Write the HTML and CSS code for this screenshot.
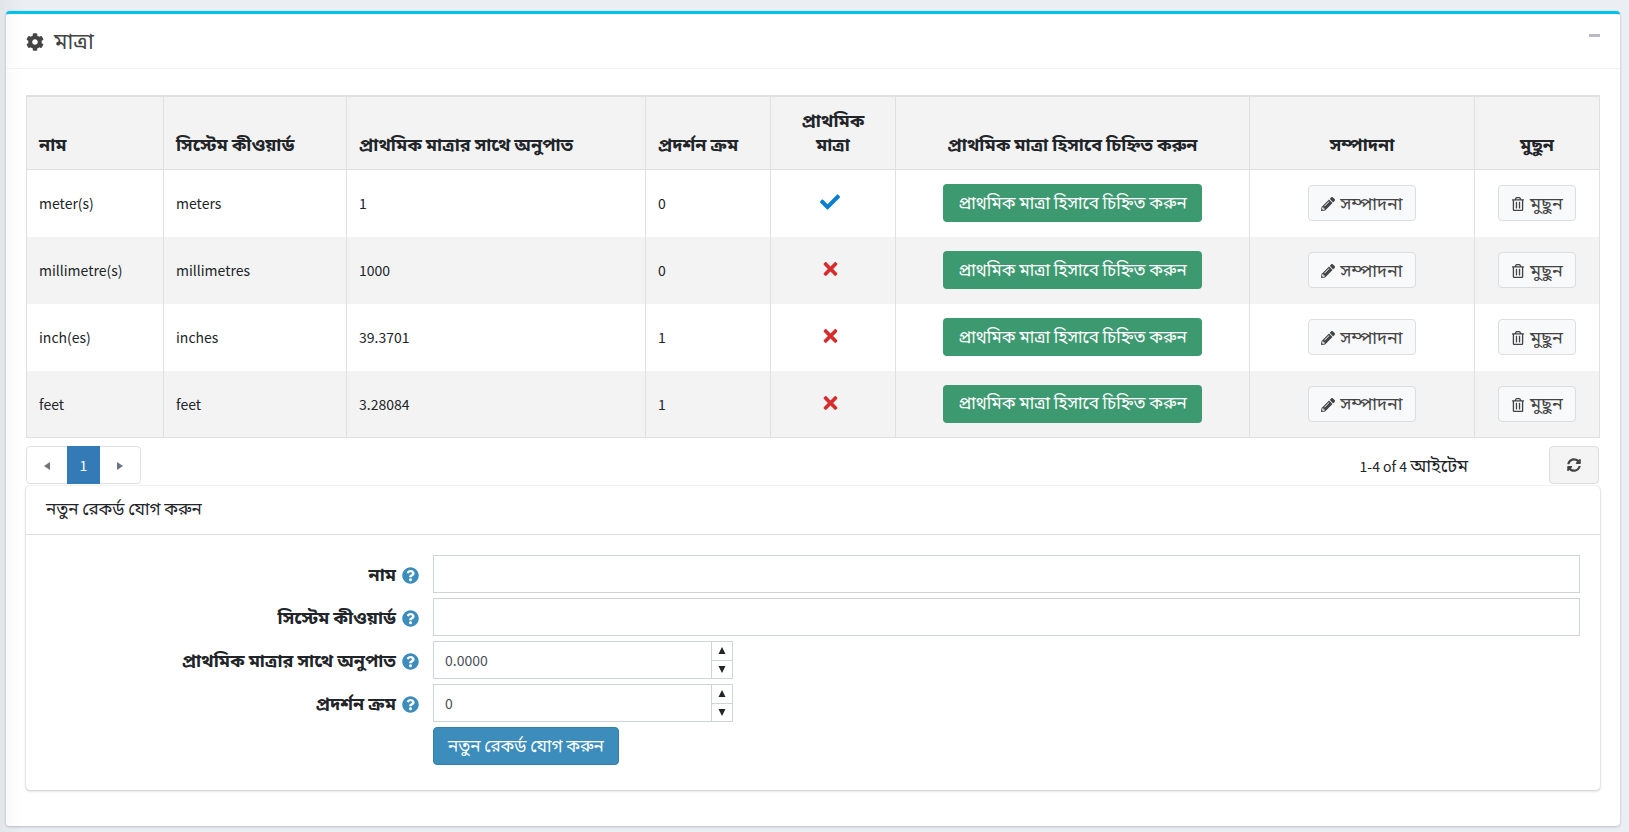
FILE: index.html
```
<!DOCTYPE html>
<html lang="bn">
<head>
<meta charset="utf-8">
<meta name="viewport" content="width=device-width, initial-scale=1">
<title>মাত্রা</title>
<link rel="stylesheet" href="styles.css">
</head>
<body>
<svg class="sprite" aria-hidden="true">
  <symbol id="check" viewBox="0 0 512 512"><path d="M173.900 439.400 7.500 273c-10-10-10-26.200 0-36.200l36.200-36.200c10-10 26.200-10 36.200 0L192 312.700 432.100 72.600c10-10 26.200-10 36.200 0l36.200 36.200c10 10 10 26.200 0 36.200L210.100 439.400c-10 10-26.200 10-36.200 0z"/></symbol>
  <symbol id="times" viewBox="0 0 352 512"><path d="m242.700 256 100.100-100.100c12.300-12.300 12.300-32.200 0-44.500l-22.200-22.200c-12.300-12.300-32.200-12.300-44.500 0L176 189.300 75.900 89.200c-12.300-12.300-32.200-12.300-44.500 0L9.200 111.400c-12.300 12.300-12.300 32.200 0 44.500L109.300 256 9.200 356.100c-12.300 12.300-12.300 32.200 0 44.500l22.200 22.200c12.300 12.300 32.200 12.300 44.500 0L176 322.700l100.100 100.100c12.300 12.300 32.200 12.300 44.500 0l22.200-22.200c12.300-12.300 12.300-32.200 0-44.500z"/></symbol>
  <symbol id="pencil" viewBox="0 0 512 512"><path d="M498 142l-46 46c-5 5-13 5-17 0L324 77c-5-5-5-12 0-17l46-46c19-19 49-19 68 0l60 60c19 19 19 49 0 68zM284.200 99.800 21.600 362.400.400 483.900c-2.900 16.400 11.400 30.600 27.800 27.800l121.500-21.300 262.600-262.600c4.800-4.800 4.800-12.600 0-17.400l-111-111c-4.800-4.700-12.600-4.700-17.700.400zM124 340c-5.500-5.500-5.500-14.300 0-19.800l154-154c5.500-5.500 14.300-5.500 19.800 0s5.500 14.300 0 19.800l-154 154c-5.500 5.500-14.300 5.500-19.800 0zM88 424h48v36.300l-64.500 11.300-31.100-31.100L51.700 376H88z"/></symbol>
  <symbol id="trash" viewBox="0 0 448 512"><path d="M268 416h24a12 12 0 0 0 12-12V188a12 12 0 0 0-12-12h-24a12 12 0 0 0-12 12v216a12 12 0 0 0 12 12zM432 80h-82.400l-34-56.700A48 48 0 0 0 274.400 0H173.600a48 48 0 0 0-41.200 23.300L98.400 80H16A16 16 0 0 0 0 96v16a16 16 0 0 0 16 16h16v336a48 48 0 0 0 48 48h288a48 48 0 0 0 48-48V128h16a16 16 0 0 0 16-16V96a16 16 0 0 0-16-16zM171.800 50.900A6 6 0 0 1 177 48h94a6 6 0 0 1 5.200 2.900L293.600 80H154.400zM368 464H80V128h288zM156 416h24a12 12 0 0 0 12-12V188a12 12 0 0 0-12-12h-24a12 12 0 0 0-12 12v216a12 12 0 0 0 12 12z"/></symbol>
  <symbol id="help" viewBox="0 0 512 512"><path d="M504 256c0 137-111 248-248 248S8 393 8 256 119 8 256 8s248 111 248 248zM262.700 90c-54.500 0-89.300 23-116.500 63.800-3.500 5.300-2.400 12.400 2.700 16.300l34.700 26.300c5.200 3.900 12.600 3 16.700-2.100 17.900-22.700 30.100-35.800 57.300-35.800 20.400 0 45.700 13.100 45.700 33 0 15-12.400 22.700-32.500 34C247.100 238.500 216 254.900 216 296v4c0 6.600 5.400 12 12 12h56c6.600 0 12-5.400 12-12v-1.300c0-28.500 83.200-29.600 83.200-106.700 0-58-60.200-102-116.500-102zM256 338c-25.400 0-46 20.600-46 46s20.600 46 46 46 46-20.600 46-46-20.600-46-46-46z"/></symbol>
  <symbol id="cog" viewBox="0 0 512 512"><path d="m487.400 315.700-42.600-24.600c4.300-23.200 4.300-47 0-70.200l42.600-24.600c4.900-2.800 7.100-8.600 5.500-14-11.100-35.600-30-67.800-54.700-94.600-3.800-4.100-10-5.100-14.800-2.300L380.800 110c-17.900-15.400-38.500-27.300-60.800-35.100V25.800c0-5.600-3.900-10.500-9.400-11.700-36.700-8.200-74.300-7.800-109.200 0-5.500 1.200-9.400 6.100-9.400 11.700V75c-22.200 7.900-42.800 19.800-60.800 35.100L88.700 85.500c-4.900-2.800-11-1.900-14.800 2.300-24.700 26.700-43.600 58.900-54.700 94.600-1.700 5.400.6 11.200 5.500 14L67.300 221c-4.300 23.200-4.300 47 0 70.200l-42.600 24.600c-4.900 2.800-7.100 8.600-5.500 14 11.100 35.600 30 67.800 54.700 94.600 3.800 4.100 10 5.100 14.800 2.300l42.600-24.600c17.900 15.400 38.500 27.300 60.800 35.100v49.200c0 5.600 3.900 10.500 9.400 11.700 36.700 8.200 74.300 7.800 109.200 0 5.500-1.200 9.400-6.100 9.400-11.700v-49.200c22.200-7.900 42.800-19.800 60.800-35.100l42.600 24.600c4.900 2.800 11 1.900 14.800-2.300 24.700-26.700 43.600-58.900 54.700-94.600 1.500-5.500-.7-11.300-5.600-14.100zM256 336c-44.100 0-80-35.900-80-80s35.900-80 80-80 80 35.900 80 80-35.900 80-80 80z"/></symbol>
  <symbol id="sync" viewBox="0 0 512 512"><path d="M370.700 133.300C339.500 104 298.900 88 255.800 88c-77.500.1-144.300 53.200-162.800 126.900-1.300 5.400-6.100 9.200-11.700 9.200H24.100c-7.500 0-13.200-6.800-11.800-14.200C33.900 94.900 134.800 8 256 8c66.400 0 126.800 26.100 171.300 68.700L463 41c15.100-15.100 41-4.400 41 17v134c0 13.300-10.700 24-24 24H346c-21.400 0-32.100-25.900-17-41zM32 296h134c21.400 0 32.100 25.900 17 41l-41.800 41.800c31.300 29.300 71.800 45.300 114.900 45.300 77.400-.1 144.300-53.100 162.800-126.800 1.300-5.400 6.100-9.200 11.700-9.200h57.300c7.500 0 13.200 6.800 11.800 14.200C478.100 417.100 377.200 504 256 504c-66.400 0-126.800-26.100-171.300-68.700L49 471c-15.100 15.100-41 4.400-41-17V320c0-13.300 10.700-24 24-24z"/></symbol>
  <symbol id="up" viewBox="0 0 8 8"><path d="M4 0 8 8H0z"/></symbol>
  <symbol id="down" viewBox="0 0 8 8"><path d="M4 8 0 0h8z"/></symbol>
  <symbol id="left" viewBox="0 0 8 8"><path d="M1 4 7 0v8z"/></symbol>
  <symbol id="right" viewBox="0 0 8 8"><path d="M7 4 1 8V0z"/></symbol>
</svg>
<main class="card">
  <header class="card-header">
    <h1 class="card-title"><svg class="icon-cog"><use href="#cog"/></svg>মাত্রা</h1>
    <button class="collapse" type="button" aria-label="−"></button>
  </header>
  <div class="card-body">
    <table class="grid">
      <colgroup><col class="c-name"><col class="c-key"><col class="c-ratio"><col class="c-small"><col class="c-small"><col class="c-mark"><col class="c-edit"><col class="c-small"></colgroup>
      <thead>
        <tr><th>নাম</th><th>সিস্টেম কীওয়ার্ড</th><th>প্রাথমিক মাত্রার সাথে অনুপাত</th><th>প্রদর্শন ক্রম</th><th class="mid">প্রাথমিক মাত্রা</th><th class="mid">প্রাথমিক মাত্রা হিসাবে চিহ্নিত করুন</th><th class="mid">সম্পাদনা</th><th class="mid">মুছুন</th></tr>
      </thead>
      <tbody>
        <tr><td>meter(s)</td><td>meters</td><td>1</td><td>0</td><td class="mid status"><svg class="icon-check"><use href="#check"/></svg></td><td class="mid"><button type="button" class="btn green">প্রাথমিক মাত্রা হিসাবে চিহ্নিত করুন</button></td><td class="mid"><button type="button" class="btn light"><svg class="icon"><use href="#pencil"/></svg>সম্পাদনা</button></td><td class="mid"><button type="button" class="btn light"><svg class="icon"><use href="#trash"/></svg>মুছুন</button></td></tr>
        <tr><td>millimetre(s)</td><td>millimetres</td><td>1000</td><td>0</td><td class="mid status"><svg class="icon-times"><use href="#times"/></svg></td><td class="mid"><button type="button" class="btn green">প্রাথমিক মাত্রা হিসাবে চিহ্নিত করুন</button></td><td class="mid"><button type="button" class="btn light"><svg class="icon"><use href="#pencil"/></svg>সম্পাদনা</button></td><td class="mid"><button type="button" class="btn light"><svg class="icon"><use href="#trash"/></svg>মুছুন</button></td></tr>
        <tr><td>inch(es)</td><td>inches</td><td>39.3701</td><td>1</td><td class="mid status"><svg class="icon-times"><use href="#times"/></svg></td><td class="mid"><button type="button" class="btn green">প্রাথমিক মাত্রা হিসাবে চিহ্নিত করুন</button></td><td class="mid"><button type="button" class="btn light"><svg class="icon"><use href="#pencil"/></svg>সম্পাদনা</button></td><td class="mid"><button type="button" class="btn light"><svg class="icon"><use href="#trash"/></svg>মুছুন</button></td></tr>
        <tr><td>feet</td><td>feet</td><td>3.28084</td><td>1</td><td class="mid status"><svg class="icon-times"><use href="#times"/></svg></td><td class="mid"><button type="button" class="btn green">প্রাথমিক মাত্রা হিসাবে চিহ্নিত করুন</button></td><td class="mid"><button type="button" class="btn light"><svg class="icon"><use href="#pencil"/></svg>সম্পাদনা</button></td><td class="mid"><button type="button" class="btn light"><svg class="icon"><use href="#trash"/></svg>মুছুন</button></td></tr>
      </tbody>
    </table>
    <div class="pager">
      <nav class="pages">
        <a href="#" class="page arrow" aria-label="◂"><svg><use href="#left"/></svg></a>
        <a href="#" class="page current">1</a>
        <a href="#" class="page arrow" aria-label="▸"><svg><use href="#right"/></svg></a>
      </nav>
      <div class="pager-info">1-4 of 4 <span class="unit">আইটেম</span></div>
      <button class="refresh" type="button" aria-label="↻"><svg><use href="#sync"/></svg></button>
    </div>
    <section class="panel">
      <h2 class="panel-header">নতুন রেকর্ড যোগ করুন</h2>
      <form class="form">
        <label class="label" for="name">নাম<svg><use href="#help"/></svg></label>
        <input class="field" id="name" type="text">
        <label class="label" for="keyword">সিস্টেম কীওয়ার্ড<svg><use href="#help"/></svg></label>
        <input class="field" id="keyword" type="text">
        <label class="label" for="ratio">প্রাথমিক মাত্রার সাথে অনুপাত<svg><use href="#help"/></svg></label>
        <div class="numeric">
          <input id="ratio" type="text" inputmode="decimal" value="0.0000">
          <div class="spin"><button type="button" aria-label="▲"><svg><use href="#up"/></svg></button><button type="button" aria-label="▼"><svg><use href="#down"/></svg></button></div>
        </div>
        <label class="label" for="order">প্রদর্শন ক্রম<svg><use href="#help"/></svg></label>
        <div class="numeric">
          <input id="order" type="text" inputmode="numeric" value="0">
          <div class="spin"><button type="button" aria-label="▲"><svg><use href="#up"/></svg></button><button type="button" aria-label="▼"><svg><use href="#down"/></svg></button></div>
        </div>
        <button type="button" class="btn blue submit">নতুন রেকর্ড যোগ করুন</button>
      </form>
    </section>
  </div>
</main>
</body>
</html>
```
FILE: styles.css
```
* { box-sizing: border-box; }

body {
  margin: 0;
  padding: 11px 9px 6px 6px;
  background: #ebeef3 linear-gradient(to right, #e2e5ea, #ebeef3) no-repeat 0 0 / 24px 100%;
  color: #212529;
  font-family: "Noto Sans CJK SC", "Noto Sans Bengali", sans-serif;
  font-size: 14px;
  line-height: 24px;
}

button, input {
  font: inherit;
  color: inherit;
  margin: 0;
}

svg { fill: currentColor; flex: none; }

.sprite { display: none; }

.card {
  background: #fff linear-gradient(to right, #fafafb, #fff) no-repeat 0 0 / 16px 100%;
  border-top: 3px solid #00c0ef;
  border-radius: 4px;
  box-shadow: 0 0 1px rgba(0, 0, 0, .13), 0 1px 3px rgba(0, 0, 0, .2);
}

.card-header {
  display: flex;
  justify-content: space-between;
  padding: 12px 20px;
  border-bottom: 1px solid #f2f2f2;
}

.card-title {
  display: flex;
  align-items: center;
  gap: 10px;
  margin: 0;
  padding-bottom: 4px;
  font-size: 22px;
  font-weight: 400;
  line-height: 26px;
  color: #444;
}

.icon-cog { width: 18px; height: 18px; margin-top: 6px; }

.collapse {
  align-self: flex-start;
  width: 11px;
  height: 18px;
  padding: 0;
  border: 0;
  background: linear-gradient(#b8bbc6, #b8bbc6) no-repeat center / 11px 3px;
}

.card-body { padding: 26px 20px 36px; }

.grid {
  width: 100%;
  table-layout: fixed;
  border-collapse: collapse;
  border: 1px solid #e0e0e0;
  border-top-width: 2px;
}

.c-name { width: 137px; }
.c-key { width: 183px; }
.c-ratio { width: 299px; }
.c-small { width: 125px; }
.c-mark { width: 354px; }
.c-edit { width: 225px; }

.grid th, .grid td {
  padding: 0 12px;
  text-align: left;
  border-left: 1px solid #e0e0e0;
}

.grid th {
  padding: 10px 12px 14px;
  font-size: 18px;
  font-weight: 700;
  vertical-align: bottom;
  background: #f3f3f3;
  border-bottom: 1px solid #e0e0e0;
}

.grid td { height: 67px; }
.grid tbody tr:nth-child(even) { background: #f3f3f3; }
.grid .mid { text-align: center; }
.grid .status { padding: 0 18px 6px 12px; }
.grid td svg { vertical-align: middle; }

.icon-check { width: 20px; height: 20px; color: #0a7fd0; }
.icon-times { width: 15px; height: 20px; color: #d62c2c; }

.btn {
  display: inline-flex;
  align-items: center;
  justify-content: center;
  gap: 5px;
  height: 38px;
  padding: 0 14px 3px;
  border: 1px solid transparent;
  border-radius: 4px;
  font-size: 17px;
  white-space: nowrap;
}

.green { background: #3d9970; color: #fff; }
.blue { background: #3c8dbc; border-color: #367fa9; color: #fff; }

.light {
  height: 36px;
  padding: 0 12px 3px;
  background: #f8f9fa;
  border-color: #ddd;
  color: #444;
  font-size: 18px;
}

.icon { width: 14px; height: 14px; margin-top: 5px; }

.pager {
  display: flex;
  align-items: center;
  margin: 8px 0 2px;
}

.pages {
  display: flex;
  height: 38px;
  border: 1px solid #dee2e6;
  border-radius: 4px;
}

.page {
  display: flex;
  align-items: center;
  justify-content: center;
  width: 40px;
  color: #6c757d;
  text-decoration: none;
}

.page svg { width: 8px; height: 8px; margin-top: 2px; }

.current {
  width: 33px;
  margin: -1px 0;
  background: #337ab7;
  color: #fff;
}

.pager-info {
  margin-left: auto;
  margin-right: 81px;
}

.unit { font-size: 18px; }

.refresh {
  display: flex;
  align-items: center;
  justify-content: center;
  width: 50px;
  height: 38px;
  margin-right: 1px;
  border: 1px solid #ddd;
  border-radius: 4px;
  background: #f4f4f4;
  color: #444;
}

.refresh svg { width: 14px; height: 14px; }

.panel {
  border-radius: 4px;
  box-shadow: 0 0 1px rgba(0, 0, 0, .25), 0 1px 3px rgba(0, 0, 0, .2);
}

.panel-header {
  margin: 0;
  padding: 10px 20px 14px;
  border-bottom: 1px solid #dfdfdf;
  font-size: 17px;
  font-weight: 400;
  line-height: 24px;
}

.form {
  display: grid;
  grid-template-columns: 25% 1fr;
  column-gap: 14px;
  row-gap: 5px;
  padding: 20px 20px 25px 6px;
}

.label {
  display: flex;
  align-items: center;
  justify-content: flex-end;
  gap: 6px;
  padding-bottom: 3px;
  font-size: 18px;
  font-weight: 700;
}

.label svg { width: 17px; height: 17px; margin-top: 5px; color: #3c8dbc; }

.field, .numeric {
  height: 38px;
  border: 1px solid #ced4da;
  background: #fff;
}

.field { width: 100%; padding: 0 12px; }
.numeric { display: flex; width: 300px; }

.numeric input {
  flex: 1;
  min-width: 0;
  padding: 0 11px;
  border: 0;
  color: #495057;
}

.spin {
  display: flex;
  flex-direction: column;
  width: 21px;
  border-left: 1px solid #ced4da;
}

.spin button {
  display: flex;
  flex: 1;
  align-items: center;
  justify-content: center;
  padding: 0;
  border: 0;
  background: #fff;
}

.spin button + button { border-top: 1px solid #ced4da; }
.spin svg { width: 8px; height: 7px; }
.submit { grid-column: 2; justify-self: start; }
```
